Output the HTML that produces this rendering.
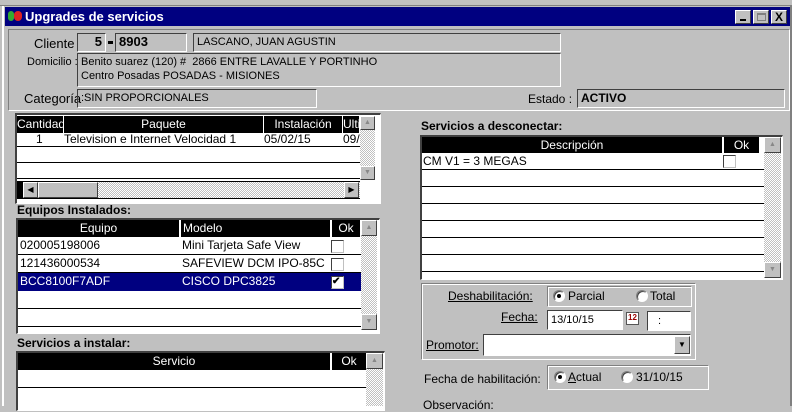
<!DOCTYPE html><html><head><meta charset="utf-8"><style>
*{box-sizing:border-box}
body{margin:0;width:792px;height:406px;overflow:hidden;background:#c0c0c0;font-family:"Liberation Sans",Arial,sans-serif;font-size:11px;color:#000;position:relative}
.a{position:absolute}
.sunk{border-top:1px solid #808080;border-left:1px solid #808080;border-bottom:1px solid #fff;border-right:1px solid #fff}
.sunk2{border-top:2px solid #404040;border-left:2px solid #404040;border-bottom:1px solid #fff;border-right:1px solid #fff}
.fld{border-top:1px solid #404040;border-left:1px solid #404040;border-bottom:1px solid #fff;border-right:1px solid #fff;padding-left:3px;line-height:16px;white-space:nowrap}
.raised{background:#c0c0c0;border-top:1px solid #fff;border-left:1px solid #fff;border-bottom:1px solid #404040;border-right:1px solid #404040}
.hdr{background:#000;color:#fff;height:17px;line-height:17px;text-align:center;border-right:1px solid #fff;white-space:nowrap;overflow:hidden;font-size:12px}
.row{background:#fff;border-bottom:1px solid #000;font-size:12px}
.chk{width:13px;height:13px;background:#fff;border-top:1px solid #404040;border-left:1px solid #404040;border-bottom:1px solid #c0c0c0;border-right:1px solid #c0c0c0}
.dith{background-color:#c0c0c0;background-image:repeating-conic-gradient(#fff 0 25%,#c0c0c0 0 50%);background-size:2px 2px}
.rad{width:12px;height:12px;border-radius:50%;background:#fff;border:1px solid #808080;border-right-color:#fff;border-bottom-color:#fff;box-shadow:inset 1px 1px 0 #404040}
.dot::after{content:"";position:absolute;left:3px;top:3px;width:4px;height:4px;background:#000;border-radius:50%}
u{text-decoration:underline}
</style></head><body>
<div class="a" style="left:0;top:0;width:792px;height:6px;background:#c0c0c0;border-bottom:1px solid #808080"></div>
<div class="a" style="left:2px;top:6px;width:2px;height:400px;background:#fff"></div>
<div class="a" style="left:5px;top:7px;width:785px;height:19px;background:#000080"></div>
<div class="a" style="left:8px;top:11px;width:6px;height:10px;background:#3a3;border-radius:3px"></div>
<div class="a" style="left:14px;top:11px;width:8px;height:10px;background:#d22;border-radius:4px"></div>
<div class="a" style="left:25px;top:8px;color:#fff;font-weight:bold;font-size:13px;line-height:17px">Upgrades de servicios</div>
<div class="a raised" style="left:735px;top:10px;width:16px;height:14px"><div class="a" style="left:4px;top:8px;width:6px;height:2px;background:#000"></div></div>
<div class="a raised" style="left:753px;top:10px;width:16px;height:14px"><div class="a" style="left:3px;top:2px;width:9px;height:8px;border:1px solid #808080;border-top-width:2px"></div></div>
<div class="a raised" style="left:771px;top:10px;width:16px;height:14px;font-weight:bold;font-size:12px;line-height:12px;text-align:center">X</div>
<div class="a" style="left:790px;top:6px;width:2px;height:400px;background:#808080"></div>
<div class="a sunk" style="left:8px;top:29px;width:782px;height:82px"></div>
<div class="a" style="left:34px;top:36px;font-size:13px">Cliente</div>
<div class="a fld" style="left:77px;top:33px;width:29px;height:19px;text-align:right;padding-right:3px;font-weight:bold;font-size:13px">5</div>
<div class="a" style="left:108px;top:41px;width:5px;height:3px;background:#000"></div>
<div class="a fld" style="left:115px;top:33px;width:72px;height:19px;font-weight:bold;font-size:13px">8903</div>
<div class="a fld" style="left:193px;top:33px;width:368px;height:19px">LASCANO, JUAN AGUSTIN</div>
<div class="a" style="left:27px;top:56px">Domicilio :</div>
<div class="a fld" style="left:77px;top:53px;width:484px;height:34px;line-height:14px;padding-top:1px">Benito suarez (120) #&nbsp; 2866 ENTRE LAVALLE Y PORTINHO<br>Centro Posadas POSADAS - MISIONES</div>
<div class="a" style="left:24px;top:91px;font-size:13px">Categoría</div>
<div class="a fld" style="left:77px;top:89px;width:240px;height:19px">:SIN PROPORCIONALES</div>
<div class="a" style="left:528px;top:92px;font-size:12px">Estado :</div>
<div class="a fld" style="left:577px;top:89px;width:208px;height:19px;font-weight:bold;font-size:12px">ACTIVO</div>
<div class="a sunk2" style="left:15px;top:113px;width:366px;height:91px;background:#fff"></div>
<div class="a hdr" style="left:17px;top:116px;width:47px">Cantidad</div>
<div class="a hdr" style="left:64px;top:116px;width:200px">Paquete</div>
<div class="a hdr" style="left:264px;top:116px;width:79px">Instalación</div>
<div class="a hdr" style="left:343px;top:116px;width:17px;text-align:left">Ultir</div>
<div class="a row" style="left:17px;top:133px;width:343px;height:14px;line-height:13px"><span class="a" style="left:19px">1</span><span class="a" style="left:47px">Television e Internet Velocidad 1</span><span class="a" style="left:247px">05/02/15</span><span class="a" style="left:326px">09/</span></div>
<div class="a row" style="left:17px;top:147px;width:343px;height:16px"></div>
<div class="a row" style="left:17px;top:163px;width:343px;height:16px"></div>
<div class="a dith" style="left:360px;top:116px;width:15px;height:64px"></div>
<div class="a raised" style="left:360px;top:116px;width:15px;height:14px;font-size:7px;color:#888;text-align:center;line-height:12px">▲</div>
<div class="a raised" style="left:360px;top:166px;width:15px;height:14px;font-size:7px;color:#888;text-align:center;line-height:12px">▼</div>
<div class="a" style="left:17px;top:181px;width:343px;height:18px;background:#000"></div>
<div class="a dith" style="left:23px;top:182px;width:337px;height:16px"></div>
<div class="a raised" style="left:23px;top:182px;width:15px;height:16px;font-size:8px;text-align:center;line-height:14px">◀</div>
<div class="a raised" style="left:38px;top:182px;width:60px;height:16px"></div>
<div class="a raised" style="left:344px;top:182px;width:15px;height:16px;font-size:8px;text-align:center;line-height:14px">▶</div>
<div class="a" style="left:17px;top:203px;font-weight:bold;font-size:12px">Equipos Instalados:</div>
<div class="a sunk2" style="left:16px;top:218px;width:364px;height:116px;background:#fff"></div>
<div class="a hdr" style="left:18px;top:220px;width:162px">Equipo</div>
<div class="a hdr" style="left:180px;top:220px;width:151px;text-align:left;padding-left:2px;border-left:1px solid #fff">Modelo</div>
<div class="a hdr" style="left:331px;top:220px;width:30px;border-left:1px solid #fff">Ok</div>
<div class="a row" style="left:18px;top:237px;width:343px;height:18px;line-height:17px"><span class="a" style="left:2px">020005198006</span><span class="a" style="left:164px">Mini Tarjeta Safe View</span><div class="a chk" style="left:313px;top:3px"></div></div>
<div class="a row" style="left:18px;top:255px;width:343px;height:18px;line-height:17px"><span class="a" style="left:2px">121436000534</span><span class="a" style="left:164px">SAFEVIEW DCM IPO-85C</span><div class="a chk" style="left:313px;top:3px"></div></div>
<div class="a" style="left:18px;top:273px;width:343px;height:18px;background:#000080;color:#fff;line-height:17px;font-size:12px"><span class="a" style="left:2px">BCC8100F7ADF</span><span class="a" style="left:164px">CISCO DPC3825</span><div class="a chk" style="left:313px;top:3px;color:#000;font-size:10px;line-height:10px;font-weight:bold">✔</div></div>
<div class="a row" style="left:18px;top:291px;width:343px;height:18px"></div>
<div class="a row" style="left:18px;top:309px;width:343px;height:18px"></div>
<div class="a dith" style="left:361px;top:220px;width:16px;height:110px"></div>
<div class="a raised" style="left:361px;top:220px;width:16px;height:16px;font-size:7px;color:#888;text-align:center;line-height:14px">▲</div>
<div class="a raised" style="left:361px;top:314px;width:16px;height:16px;font-size:7px;color:#888;text-align:center;line-height:14px">▼</div>
<div class="a" style="left:17px;top:336px;font-weight:bold;font-size:12px">Servicios a instalar:</div>
<div class="a sunk2" style="left:16px;top:351px;width:369px;height:60px;background:#fff"></div>
<div class="a hdr" style="left:18px;top:353px;width:313px">Servicio</div>
<div class="a hdr" style="left:331px;top:353px;width:36px;border-left:1px solid #fff">Ok</div>
<div class="a row" style="left:18px;top:370px;width:348px;height:18px"></div>
<div class="a dith" style="left:366px;top:353px;width:17px;height:53px"></div>
<div class="a raised" style="left:366px;top:353px;width:17px;height:16px;font-size:7px;color:#888;text-align:center;line-height:14px">▲</div>
<div class="a" style="left:421px;top:119px;font-weight:bold;font-size:12px">Servicios a desconectar:</div>
<div class="a sunk2" style="left:420px;top:135px;width:363px;height:145px;background:#fff"></div>
<div class="a hdr" style="left:422px;top:137px;width:301px">Descripción</div>
<div class="a hdr" style="left:723px;top:137px;width:37px;border-left:1px solid #fff">Ok</div>
<div class="a row" style="left:422px;top:153px;width:342px;height:17px;line-height:16px"><span class="a" style="left:1px">CM V1 = 3 MEGAS</span><div class="a chk" style="left:301px;top:2px"></div></div>
<div class="a row" style="left:422px;top:170px;width:342px;height:17px"></div>
<div class="a row" style="left:422px;top:187px;width:342px;height:17px"></div>
<div class="a row" style="left:422px;top:204px;width:342px;height:17px"></div>
<div class="a row" style="left:422px;top:221px;width:342px;height:17px"></div>
<div class="a row" style="left:422px;top:238px;width:342px;height:17px"></div>
<div class="a row" style="left:422px;top:255px;width:342px;height:17px"></div>
<div class="a dith" style="left:764px;top:137px;width:17px;height:141px"></div>
<div class="a raised" style="left:764px;top:137px;width:17px;height:16px;font-size:7px;color:#888;text-align:center;line-height:14px">▲</div>
<div class="a raised" style="left:764px;top:262px;width:17px;height:16px;font-size:7px;color:#888;text-align:center;line-height:14px">▼</div>
<div class="a sunk" style="left:421px;top:283px;width:275px;height:77px;box-shadow:inset 1px 1px 0 #fff"></div>
<div class="a" style="left:448px;top:289px;font-size:12px"><u>Deshabilitación:</u></div>
<div class="a sunk" style="left:547px;top:286px;width:145px;height:21px;box-shadow:inset 1px 1px 0 #fff"></div>
<div class="a rad dot" style="left:553px;top:290px"></div><div class="a" style="left:568px;top:289px;font-size:12px">Parcial</div>
<div class="a rad" style="left:636px;top:290px"></div><div class="a" style="left:650px;top:289px;font-size:12px">Total</div>
<div class="a" style="left:501px;top:310px;font-size:12px"><u>Fecha:</u></div>
<div class="a fld" style="left:547px;top:310px;width:76px;height:20px;background:#fff;line-height:18px">13/10/15</div>
<div class="a" style="left:626px;top:312px;width:13px;height:13px;border:1px solid #555;background:#fff;font-size:8px;color:#900;font-weight:bold;line-height:9px;text-align:center">12</div>
<div class="a fld" style="left:647px;top:311px;width:44px;height:20px;background:#fff;line-height:18px;padding-left:10px">:</div>
<div class="a" style="left:426px;top:338px;font-size:12px"><u>Promotor:</u></div>
<div class="a fld" style="left:483px;top:334px;width:208px;height:22px;background:#fff"></div>
<div class="a raised" style="left:674px;top:336px;width:16px;height:18px;font-size:8px;text-align:center;line-height:16px">▼</div>
<div class="a" style="left:424px;top:372px;font-size:12px">Fecha de habilitación:</div>
<div class="a sunk" style="left:547px;top:365px;width:162px;height:25px;box-shadow:inset 1px 1px 0 #fff"></div>
<div class="a rad dot" style="left:554px;top:371px"></div><div class="a" style="left:568px;top:370px;font-size:12px"><u>A</u>ctual</div>
<div class="a rad" style="left:621px;top:371px"></div><div class="a" style="left:636px;top:370px;font-size:12px">31/10/15</div>
<div class="a" style="left:423px;top:398px;font-size:12px">Observación:</div>
</body></html>
